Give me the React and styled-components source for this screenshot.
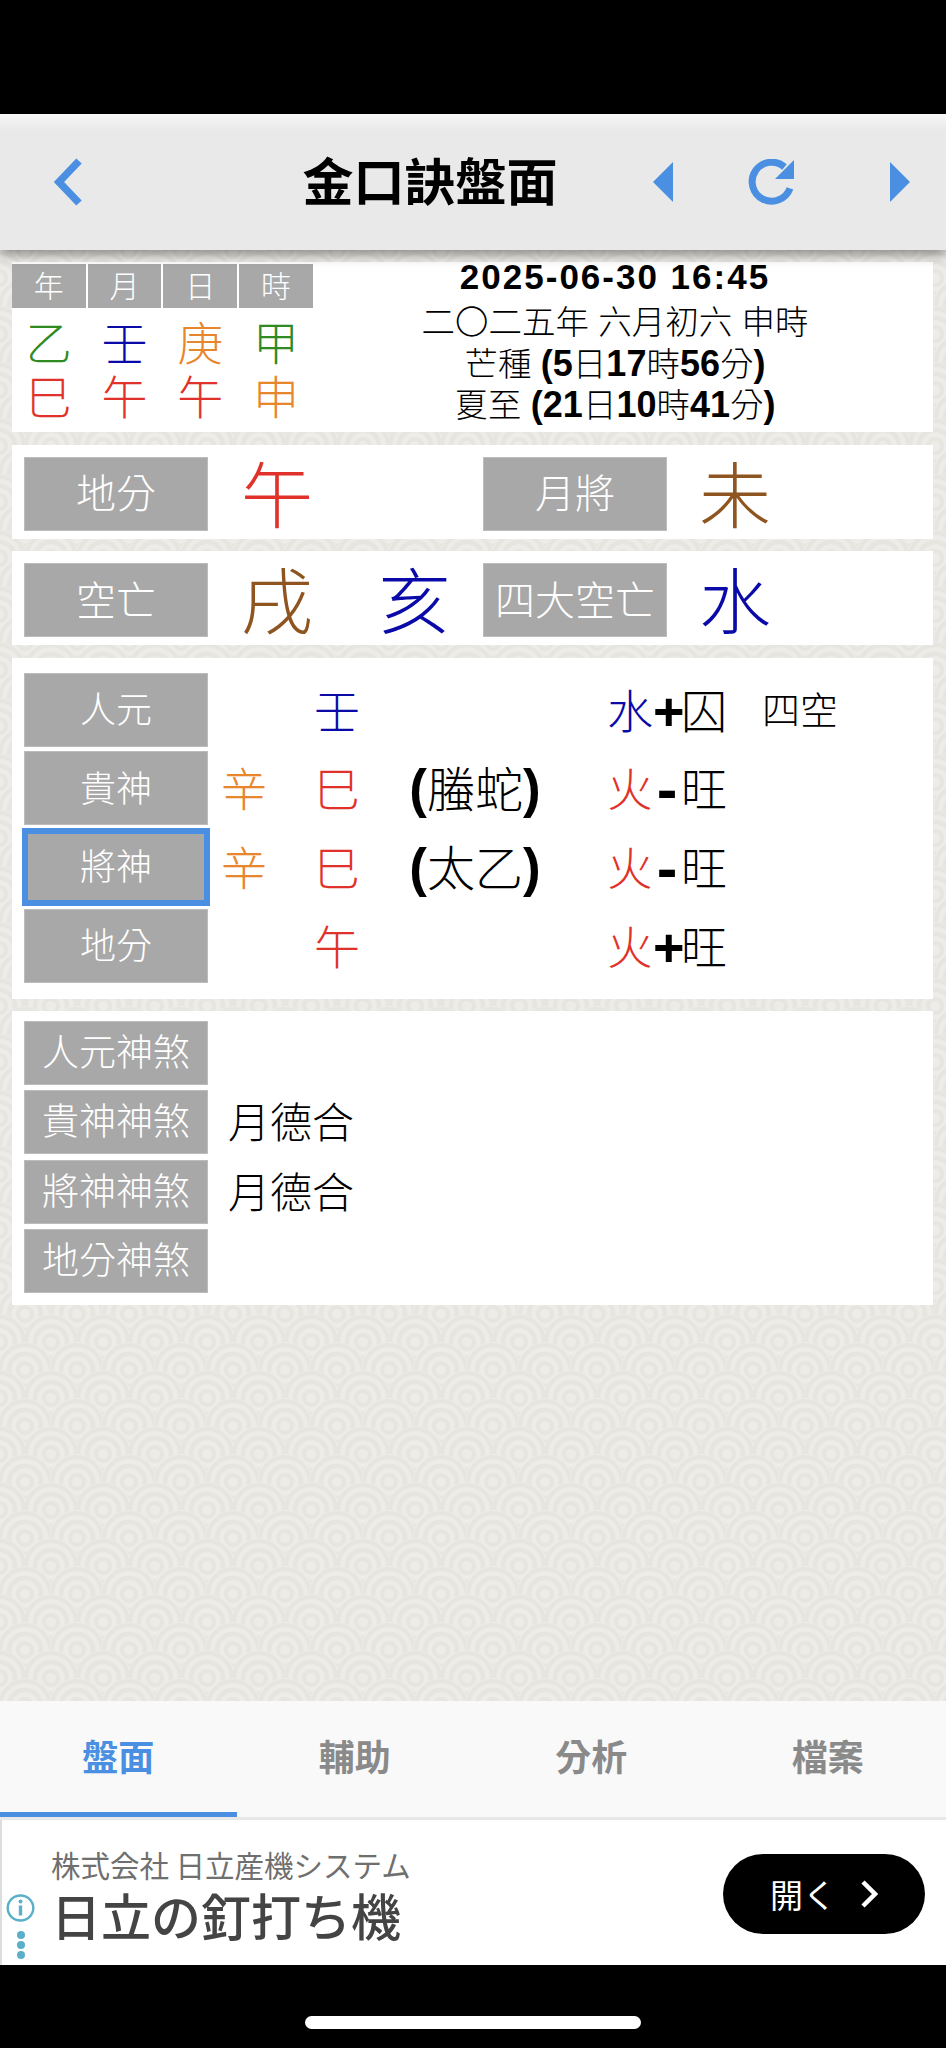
import React from 'react'
import styled, { createGlobalStyle } from 'styled-components'

const tile = `%3Csvg xmlns='http://www.w3.org/2000/svg' width='52' height='56' viewBox='0 0 52 56'%3E%3Cdefs%3E%3Cg id='c'%3E%3Ccircle r='28' fill='%23edece8'/%3E%3Ccircle r='25' fill='none' stroke='%23e6e5e0' stroke-width='4'/%3E%3Ccircle r='16' fill='none' stroke='%23e6e5e0' stroke-width='4.5'/%3E%3Ccircle r='7' fill='none' stroke='%23e6e5e0' stroke-width='4'/%3E%3C/g%3E%3C/defs%3E%3Crect width='52' height='56' fill='%23edece8'/%3E%3Cuse href='%23c' x='26' y='-28'/%3E%3Cuse href='%23c' x='0' y='0'/%3E%3Cuse href='%23c' x='52' y='0'/%3E%3Cuse href='%23c' x='26' y='28'/%3E%3Cuse href='%23c' x='0' y='56'/%3E%3Cuse href='%23c' x='52' y='56'/%3E%3C/svg%3E`

const blue = '#4a8fe2'
const colors = {
  green: '#2f8a1f',
  navy: '#0a0aa8',
  orange: '#e8862c',
  red: '#e0322a',
  brown: '#8f5520',
}

const Global = createGlobalStyle`
  html, body { margin: 0; padding: 0; background: #000; }
  * { box-sizing: border-box; }
  body {
    font-family: "Liberation Sans", "Noto Sans CJK TC", sans-serif;
    font-weight: 400;
  }
`

const Screen = styled.div`
  width: 946px;
  height: 2048px;
  display: flex;
  flex-direction: column;
  background: #000;
  overflow: hidden;
`
const TopBlack = styled.div`
  height: 114px;
  flex: none;
`
const Header = styled.header`
  position: relative;
  z-index: 2;
  height: 136px;
  flex: none;
  display: grid;
  grid-template-columns: 44px 30px 1fr 20px 75px 47px 95px 20px 36px;
  align-items: center;
  background: linear-gradient(#f8f8f8 0, #e9e9e9 16px, #e9e9e9 100%);
  box-shadow: 0 4px 12px rgba(0, 0, 0, 0.45);
  padding: 0 0 0 9px;
`
const Title = styled.h1`
  margin: 0;
  font: 700 51px/1 "Noto Sans CJK TC", sans-serif;
  color: #000;
  text-align: center;
  padding: 0 0 5px 124px;
`
const IconCell = styled.div`
  grid-column: ${(p) => p.$col};
  display: flex;
  align-items: center;
  color: ${blue};
`
const Content = styled.main`
  flex: 1;
  display: flex;
  flex-direction: column;
  gap: 12.5px;
  padding: 12px 13px 0 12px;
  background: #edece8 url("data:image/svg+xml,${tile}") 25px 0;
`
const Panel = styled.section`
  background: #fff;
  height: ${(p) => p.$h}px;
  flex: none;
`
const TopPanel = styled(Panel)`
  display: flex;
  padding-top: 2px;
`
const MiniTable = styled.div`
  width: 301px;
  flex: none;
  display: grid;
  grid-template-columns: repeat(4, 73.7px);
  column-gap: 2px;
  grid-template-rows: 44px 5px 54px 54px;
`
const MiniHead = styled.div`
  background: #a8a8a8;
  color: #fff;
  font: 300 30px/41px "Noto Sans CJK TC", sans-serif;
  text-align: center;
`
const MiniSpacer = styled.div`
  grid-column: 1 / -1;
`
const Stem = styled.div`
  color: ${(p) => colors[p.$c]};
  font: 300 46px/54px "Noto Sans CJK TC", sans-serif;
  text-align: center;
`
const DateBlock = styled.div`
  flex: 1;
  text-align: center;
  color: #000;
  padding-right: 16px;
`
const DateLine = styled.div`
  font: 700 35px/36px "Liberation Sans", sans-serif;
  letter-spacing: 2px;
  margin-top: -5px;
  height: 44px;
`
const InfoLine = styled.div`
  font: 300 33.5px/40.5px "Liberation Sans", "Noto Sans CJK TC", sans-serif;
  white-space: nowrap;
  & b {
    font-weight: 700;
    font-size: 36px;
  }
`
const PairPanel = styled(Panel)`
  display: grid;
  grid-template-columns: 184px 138px 137px 184px 136px;
  padding: 12px 0 0 12px;
`
const Label = styled.div`
  height: ${(p) => p.$h || 74}px;
  background: #a8a8a8;
  color: #fff;
  border: 1px solid ${(p) => (p.$selected ? blue : '#bcbcbc')};
  padding-bottom: 5px;
  font: 300 ${(p) => p.$size || 36}px/1 "Noto Sans CJK TC", sans-serif;
  display: flex;
  align-items: center;
  justify-content: center;
  white-space: nowrap;
  ${(p) => p.$selected && `box-shadow: 0 0 0 2px ${blue}, inset 0 0 0 3px ${blue};`}
`
const BigChar = styled.div`
  color: ${(p) => colors[p.$c]};
  font: 300 72px/68px "Noto Sans CJK TC", sans-serif;
  text-align: center;
`
const ChartPanel = styled(Panel)`
  display: grid;
  grid-template-columns: 184px 72px 114px 162px 206px 1fr;
  grid-auto-rows: 74px;
  row-gap: 4.7px;
  padding: 15px 0 0 12px;
`
const ChartCell = styled.div`
  color: ${(p) => (p.$c ? colors[p.$c] : '#000')};
  font: 300 46px/70px "Noto Sans CJK TC", sans-serif;
  text-align: center;
  white-space: nowrap;
`
const God = styled(ChartCell)`
  font-size: 48px;
  & b {
    font: 700 53px/70px "Liberation Sans", sans-serif;
  }
`
const Element = styled.div`
  display: flex;
  padding-left: 51px;
  font: 300 46px/70px "Noto Sans CJK TC", sans-serif;
  color: #000;
`
const Sign = styled.span`
  width: 28px;
  text-align: center;
  font: 700 ${(p) => (p.$minus ? 62 : 54)}px/76px "Liberation Sans", sans-serif;
`
const ElementChar = styled.span`
  color: ${(p) => colors[p.$c]};
`
const Note = styled.div`
  font: 300 38px/70px "Noto Sans CJK TC", sans-serif;
  color: #000;
`
const SpiritPanel = styled(Panel)`
  display: grid;
  grid-template-columns: 184px 1fr;
  grid-auto-rows: 64px;
  row-gap: 5.3px;
  padding: 10px 0 0 12px;
`
const SpiritText = styled.div`
  padding-left: 20px;
  font: 300 42px/60px "Noto Sans CJK TC", sans-serif;
  color: #000;
`
const Tabs = styled.nav`
  height: 119px;
  flex: none;
  display: grid;
  grid-template-columns: repeat(4, 1fr);
  background: #f9f9f9;
  border-bottom: 3px solid #e8e8e8;
`
const Tab = styled.div`
  height: 116px;
  display: flex;
  align-items: center;
  justify-content: center;
  padding-bottom: 4px;
  font: 700 36px/1 "Noto Sans CJK TC", sans-serif;
  color: ${(p) => (p.$active ? blue : '#8a8a8a')};
  border-bottom: 5px solid ${(p) => (p.$active ? blue : 'transparent')};
`
const Ad = styled.aside`
  height: 145px;
  flex: none;
  display: flex;
  align-items: stretch;
  background: #fff;
  border-left: 2px solid #ddd;
`
const AdRail = styled.div`
  width: 37px;
  flex: none;
  display: flex;
  flex-direction: column;
  align-items: center;
  justify-content: flex-end;
  padding: 0 0 6px 0;
  gap: 9px;
`
const AdDots = styled.div`
  display: flex;
  flex-direction: column;
  gap: 2px;
`
const AdDot = styled.span`
  width: 8px;
  height: 8px;
  border-radius: 50%;
  background: #5bb0c9;
`
const AdText = styled.div`
  flex: 1;
  padding: 26px 0 0 12px;
`
const AdCompany = styled.div`
  font: 400 29.5px/36px "Noto Sans CJK JP", sans-serif;
  color: #6f6f6f;
  white-space: nowrap;
`
const AdTitle = styled.div`
  font: 500 50px/60px "Noto Sans CJK JP", sans-serif;
  color: #444;
  margin-top: 2px;
  white-space: nowrap;
`
const AdButton = styled.div`
  width: 202px;
  height: 80px;
  margin: 34px 21px 0 0;
  border-radius: 40px;
  background: #000;
  color: #fff;
  display: flex;
  align-items: center;
  gap: 24px;
  padding-left: 47px;
  font: 400 33px/1 "Noto Sans CJK JP", sans-serif;
`
const BottomBlack = styled.div`
  height: 83px;
  flex: none;
  display: flex;
  justify-content: center;
  padding-top: 51px;
`
const HomeBar = styled.div`
  width: 336px;
  height: 13px;
  border-radius: 7px;
  background: #fff;
`

const BackIcon = () => (
  <svg width="30" height="48" viewBox="0 0 30 48">
    <polyline points="26,3 6,24 26,45" fill="none" stroke={blue} strokeWidth="7.5" />
  </svg>
)
const Triangle = ({ left }) => (
  <svg width="20" height="40" viewBox="0 0 20 40">
    <polygon points={left ? '20,0 0,20 20,40' : '0,0 20,20 0,40'} fill={blue} />
  </svg>
)
const RefreshIcon = () => (
  <svg width="47" height="47" viewBox="0 0 47 47">
    <path d="M36.5 8A19.5 19.5 0 1 0 42 29.4" fill="none" stroke={blue} strokeWidth="7" />
    <polygon points="46,1 46,20 27,20" fill={blue} />
  </svg>
)
const InfoIcon = () => (
  <svg width="29" height="28" viewBox="0 0 29 28">
    <ellipse cx="14.5" cy="14" rx="12.8" ry="12.5" fill="none" stroke="#5bb0c9" strokeWidth="2.4" />
    <rect x="12.8" y="11.5" width="3.4" height="10" fill="#5bb0c9" />
    <circle cx="14.5" cy="7.5" r="2" fill="#5bb0c9" />
  </svg>
)
const ChevronRight = () => (
  <svg width="18" height="28" viewBox="0 0 18 28">
    <polyline points="3,2 15,14 3,26" fill="none" stroke="#fff" strokeWidth="4.5" />
  </svg>
)

const stems = [
  ['乙', 'green'],
  ['壬', 'navy'],
  ['庚', 'orange'],
  ['甲', 'green'],
  ['巳', 'red'],
  ['午', 'red'],
  ['午', 'red'],
  ['申', 'orange'],
]

const chart = [
  { label: '人元', main: '壬', mainC: 'navy', el: '水', elC: 'navy', sign: '+', state: '囚', note: '四空' },
  { label: '貴神', side: '辛', main: '巳', mainC: 'red', god: '螣蛇', el: '火', elC: 'red', sign: '-', state: '旺' },
  { label: '將神', side: '辛', main: '巳', mainC: 'red', god: '太乙', el: '火', elC: 'red', sign: '-', state: '旺', selected: true },
  { label: '地分', main: '午', mainC: 'red', el: '火', elC: 'red', sign: '+', state: '旺' },
]

const spirits = [
  ['人元神煞', ''],
  ['貴神神煞', '月德合'],
  ['將神神煞', '月德合'],
  ['地分神煞', ''],
]

export default function App() {
  return (
    <Screen>
      <Global />
      <TopBlack />
      <Header>
        <IconCell $col={2}>
          <BackIcon />
        </IconCell>
        <Title>金口訣盤面</Title>
        <IconCell $col={4}>
          <Triangle left />
        </IconCell>
        <IconCell $col={6}>
          <RefreshIcon />
        </IconCell>
        <IconCell $col={8}>
          <Triangle />
        </IconCell>
      </Header>
      <Content>
        <TopPanel $h={170}>
          <MiniTable>
            {['年', '月', '日', '時'].map((t) => (
              <MiniHead key={t}>{t}</MiniHead>
            ))}
            <MiniSpacer />
            {stems.map(([t, c], i) => (
              <Stem key={i} $c={c}>
                {t}
              </Stem>
            ))}
          </MiniTable>
          <DateBlock>
            <DateLine>2025-06-30 16:45</DateLine>
            <InfoLine>二〇二五年 六月初六 申時</InfoLine>
            <InfoLine>
              芒種 <b>(5</b>日<b>17</b>時<b>56</b>分<b>)</b>
            </InfoLine>
            <InfoLine>
              夏至 <b>(21</b>日<b>10</b>時<b>41</b>分<b>)</b>
            </InfoLine>
          </DateBlock>
        </TopPanel>
        <PairPanel $h={94}>
          <Label $size={40}>地分</Label>
          <BigChar $c="red">午</BigChar>
          <div />
          <Label $size={40}>月將</Label>
          <BigChar $c="brown">未</BigChar>
        </PairPanel>
        <PairPanel $h={94}>
          <Label $size={40}>空亡</Label>
          <BigChar $c="brown">戌</BigChar>
          <BigChar $c="navy">亥</BigChar>
          <Label $size={40}>四大空亡</Label>
          <BigChar $c="navy">水</BigChar>
        </PairPanel>
        <ChartPanel $h={341}>
          {chart.map((r) => (
            <React.Fragment key={r.label}>
              <Label $selected={r.selected}>{r.label}</Label>
              <ChartCell $c="orange">{r.side}</ChartCell>
              <ChartCell $c={r.mainC}>{r.main}</ChartCell>
              <God>
                {r.god && (
                  <>
                    <b>(</b>
                    {r.god}
                    <b>)</b>
                  </>
                )}
              </God>
              <Element>
                <ElementChar $c={r.elC}>{r.el}</ElementChar>
                <Sign $minus={r.sign === '-'}>{r.sign}</Sign>
                <span>{r.state}</span>
              </Element>
              <Note>{r.note}</Note>
            </React.Fragment>
          ))}
        </ChartPanel>
        <SpiritPanel $h={294}>
          {spirits.map(([label, text]) => (
            <React.Fragment key={label}>
              <Label $h={64} $size={37}>
                {label}
              </Label>
              <SpiritText>{text}</SpiritText>
            </React.Fragment>
          ))}
        </SpiritPanel>
      </Content>
      <Tabs>
        <Tab $active>盤面</Tab>
        <Tab>輔助</Tab>
        <Tab>分析</Tab>
        <Tab>檔案</Tab>
      </Tabs>
      <Ad>
        <AdRail>
          <InfoIcon />
          <AdDots>
            <AdDot />
            <AdDot />
            <AdDot />
          </AdDots>
        </AdRail>
        <AdText>
          <AdCompany>株式会社 日立産機システム</AdCompany>
          <AdTitle>日立の釘打ち機</AdTitle>
        </AdText>
        <AdButton>
          開く
          <ChevronRight />
        </AdButton>
      </Ad>
      <BottomBlack>
        <HomeBar />
      </BottomBlack>
    </Screen>
  )
}
